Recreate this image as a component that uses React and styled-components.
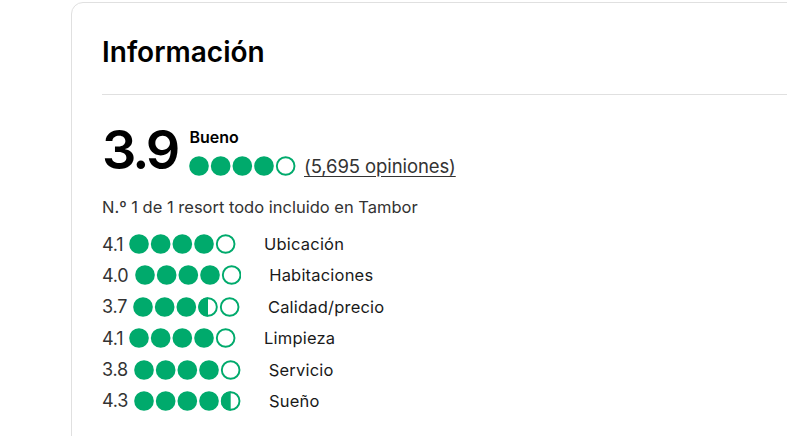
import React from "react";
import styled, { createGlobalStyle } from "styled-components";

const GlobalStyle = createGlobalStyle`
  html, body {
    margin: 0;
    padding: 0;
    background: #fff;
    overflow: hidden;
  }
  body {
    font-family: Inter, "Noto Sans", "Liberation Sans", sans-serif;
    color: #000;
  }
`;

const Page = styled.div`
  padding: 2px 0 0 71px;
  width: 787px;
  height: 436px;
  box-sizing: border-box;
  overflow: hidden;
`;

const Card = styled.section`
  width: 780px;
  height: 460px;
  box-sizing: border-box;
  border: 1px solid #e0e0e0;
  border-radius: 12px;
  padding: 31px 0 0 30px;
`;

const Title = styled.h2`
  margin: 0;
  font-size: 28px;
  line-height: 36px;
  font-weight: 600;
`;

const Divider = styled.hr`
  margin: 24px 0 0;
  border: 0;
  border-top: 1px solid #e0e0e0;
`;

const Summary = styled.div`
  display: flex;
  align-items: flex-end;
  gap: 12px;
  margin-top: 30px;
`;

const BigScore = styled.div`
  font-size: 54px;
  line-height: 50px;
  font-weight: 600;
  letter-spacing: -3px;
`;

const SummaryRight = styled.div`
  display: flex;
  flex-direction: column;
  gap: 8px;
  margin-bottom: -2px;
`;

const Label = styled.div`
  font-size: 16px;
  line-height: 20px;
  font-weight: 600;
`;

const BubbleLine = styled.div`
  display: flex;
  align-items: center;
  gap: 8px;
`;

const Reviews = styled.a`
  font-size: 18.5px;
  line-height: 22px;
  color: #333;
  text-decoration: underline;
  text-underline-offset: 3px;
  letter-spacing: -0.1px;
`;

const Rank = styled.div`
  margin-top: 22px;
  font-size: 16.5px;
  line-height: 20px;
  color: #333;
`;

const Rows = styled.div`
  display: flex;
  flex-direction: column;
  gap: 11.4px;
  margin-top: 17px;
`;

const Row = styled.div`
  display: flex;
  align-items: center;
  height: 20px;
`;

const RowScore = styled.span`
  font-size: 18px;
  color: #333;
  letter-spacing: -0.2px;
  margin-right: 6px;
`;

const RowLabel = styled.span`
  font-size: 16.5px;
  color: #1a1a1a;
  margin-left: 28px;
  letter-spacing: 0.2px;
`;

const BubbleSvg = styled.svg`
  display: block;
  flex: none;
`;

function Bubbles({ value, height = 20 }) {
  const width = (128 / 24) * height;
  return (
    <BubbleSvg width={width} height={height} viewBox="0 0 128 24">
      {[0, 1, 2, 3, 4].map((i) => {
        const cx = 12 + i * 26;
        const fill = value - i;
        if (fill >= 0.75) {
          return <circle key={i} cx={cx} cy="12" r="11.8" fill="#00aa6c" />;
        }
        if (fill >= 0.25) {
          return (
            <g key={i}>
              <path d={`M${cx} 0.2a11.8 11.8 0 0 0 0 23.6z`} fill="#00aa6c" />
              <circle cx={cx} cy="12" r="10.6" fill="none" stroke="#00aa6c" strokeWidth="2.3" />
            </g>
          );
        }
        return (
          <circle key={i} cx={cx} cy="12" r="10.6" fill="none" stroke="#00aa6c" strokeWidth="2.3" />
        );
      })}
    </BubbleSvg>
  );
}

const ratings = [
  { score: "4.1", value: 4, label: "Ubicación" },
  { score: "4.0", value: 4, label: "Habitaciones" },
  { score: "3.7", value: 3.5, label: "Calidad/precio" },
  { score: "4.1", value: 4, label: "Limpieza" },
  { score: "3.8", value: 4, label: "Servicio" },
  { score: "4.3", value: 4.5, label: "Sueño" },
];

export default function App() {
  return (
    <>
      <GlobalStyle />
      <Page>
        <Card>
          <Title>Información</Title>
          <Divider />
          <Summary>
            <BigScore>3.9</BigScore>
            <SummaryRight>
              <Label>Bueno</Label>
              <BubbleLine>
                <Bubbles value={4} />
                <Reviews>(5,695 opiniones)</Reviews>
              </BubbleLine>
            </SummaryRight>
          </Summary>
          <Rank>N.º 1 de 1 resort todo incluido en Tambor</Rank>
          <Rows>
            {ratings.map((r) => (
              <Row key={r.label}>
                <RowScore>{r.score}</RowScore>
                <Bubbles value={r.value} />
                <RowLabel>{r.label}</RowLabel>
              </Row>
            ))}
          </Rows>
        </Card>
      </Page>
    </>
  );
}
